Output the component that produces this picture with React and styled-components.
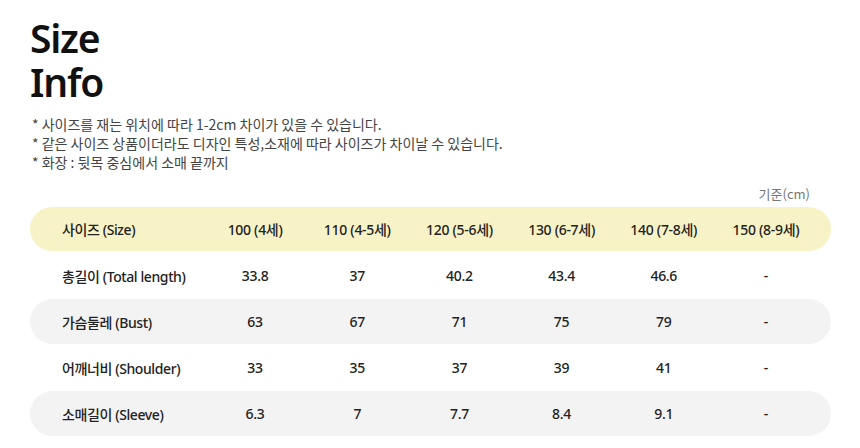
import React from 'react'
import styled, { createGlobalStyle } from 'styled-components'

const GlobalStyle = createGlobalStyle`
    body {
        margin: 0;
        background: #fff;
        font-family: "Noto Sans", "Noto Sans CJK KR", sans-serif;
        color: #222;
    }
`

const Container = styled.div`
    width: 860px;
    height: 448px;
    padding: 16px 29px 0 30px;
    box-sizing: border-box;
    overflow: hidden;
`

const Title = styled.h1`
    margin: 0;
    font-size: 39px;
    line-height: 44px;
    font-weight: 600;
    letter-spacing: -1.2px;
    color: #111;
`

const Notes = styled.ul`
    list-style: none;
    margin: 11px 0 0 2px;
    padding: 0;
`

const Note = styled.li`
    font-size: 14px;
    line-height: 19px;
    color: #444;
    font-family: "Noto Sans CJK KR", sans-serif;
    font-weight: 400;
    letter-spacing: 0;
`

const Unit = styled.div`
    text-align: right;
    padding-right: 21px;
    margin-top: 12px;
    font-size: 13px;
    line-height: 20px;
    color: #777;
    font-family: "Noto Sans CJK KR", sans-serif;
`

const Table = styled.div`
    margin-top: 3px;
    display: flex;
    flex-direction: column;
    gap: 1px;
`

const Row = styled.div`
    display: grid;
    grid-template-columns: 174px repeat(6, 1fr);
    padding-right: 14px;
    height: ${props => props.$head ? 44 : 45}px;
    margin-bottom: ${props => props.$head ? 1 : 0}px;
    align-items: center;
    border-radius: 23px;
    background: ${props => props.$head ? '#f7f3c6' : props.$shade ? '#f3f3f3' : 'transparent'};
`

const Label = styled.div`
    padding-left: 32px;
    font-size: 14px;
    font-weight: 500;
    letter-spacing: -0.4px;
    white-space: nowrap;
`

const Cell = styled.div`
    text-align: center;
    font-size: 14px;
    font-weight: 500;
    letter-spacing: -0.3px;
    white-space: nowrap;
`

const sizes = ['100 (4세)', '110 (4-5세)', '120 (5-6세)', '130 (6-7세)', '140 (7-8세)', '150 (8-9세)']

const rows = [
    { label: '총길이 (Total length)', values: ['33.8', '37', '40.2', '43.4', '46.6', '-'] },
    { label: '가슴둘레 (Bust)', values: ['63', '67', '71', '75', '79', '-'] },
    { label: '어깨너비 (Shoulder)', values: ['33', '35', '37', '39', '41', '-'] },
    { label: '소매길이 (Sleeve)', values: ['6.3', '7', '7.7', '8.4', '9.1', '-'] },
]

const App = () => {
  return (
    <Container>
        <GlobalStyle />
        <Title>Size<br />Info</Title>
        <Notes>
            <Note>* 사이즈를 재는 위치에 따라 1-2cm 차이가 있을 수 있습니다.</Note>
            <Note>* 같은 사이즈 상품이더라도 디자인 특성,소재에 따라 사이즈가 차이날 수 있습니다.</Note>
            <Note>* 화장 : 뒷목 중심에서 소매 끝까지</Note>
        </Notes>
        <Unit>기준(cm)</Unit>
        <Table>
            <Row $head>
                <Label>사이즈 (Size)</Label>
                {sizes.map(s => <Cell key={s}>{s}</Cell>)}
            </Row>
            {rows.map((r, i) => (
                <Row key={r.label} $shade={i % 2 === 1}>
                    <Label>{r.label}</Label>
                    {r.values.map((v, j) => <Cell key={j}>{v}</Cell>)}
                </Row>
            ))}
        </Table>
    </Container>
  )
}

export default App
